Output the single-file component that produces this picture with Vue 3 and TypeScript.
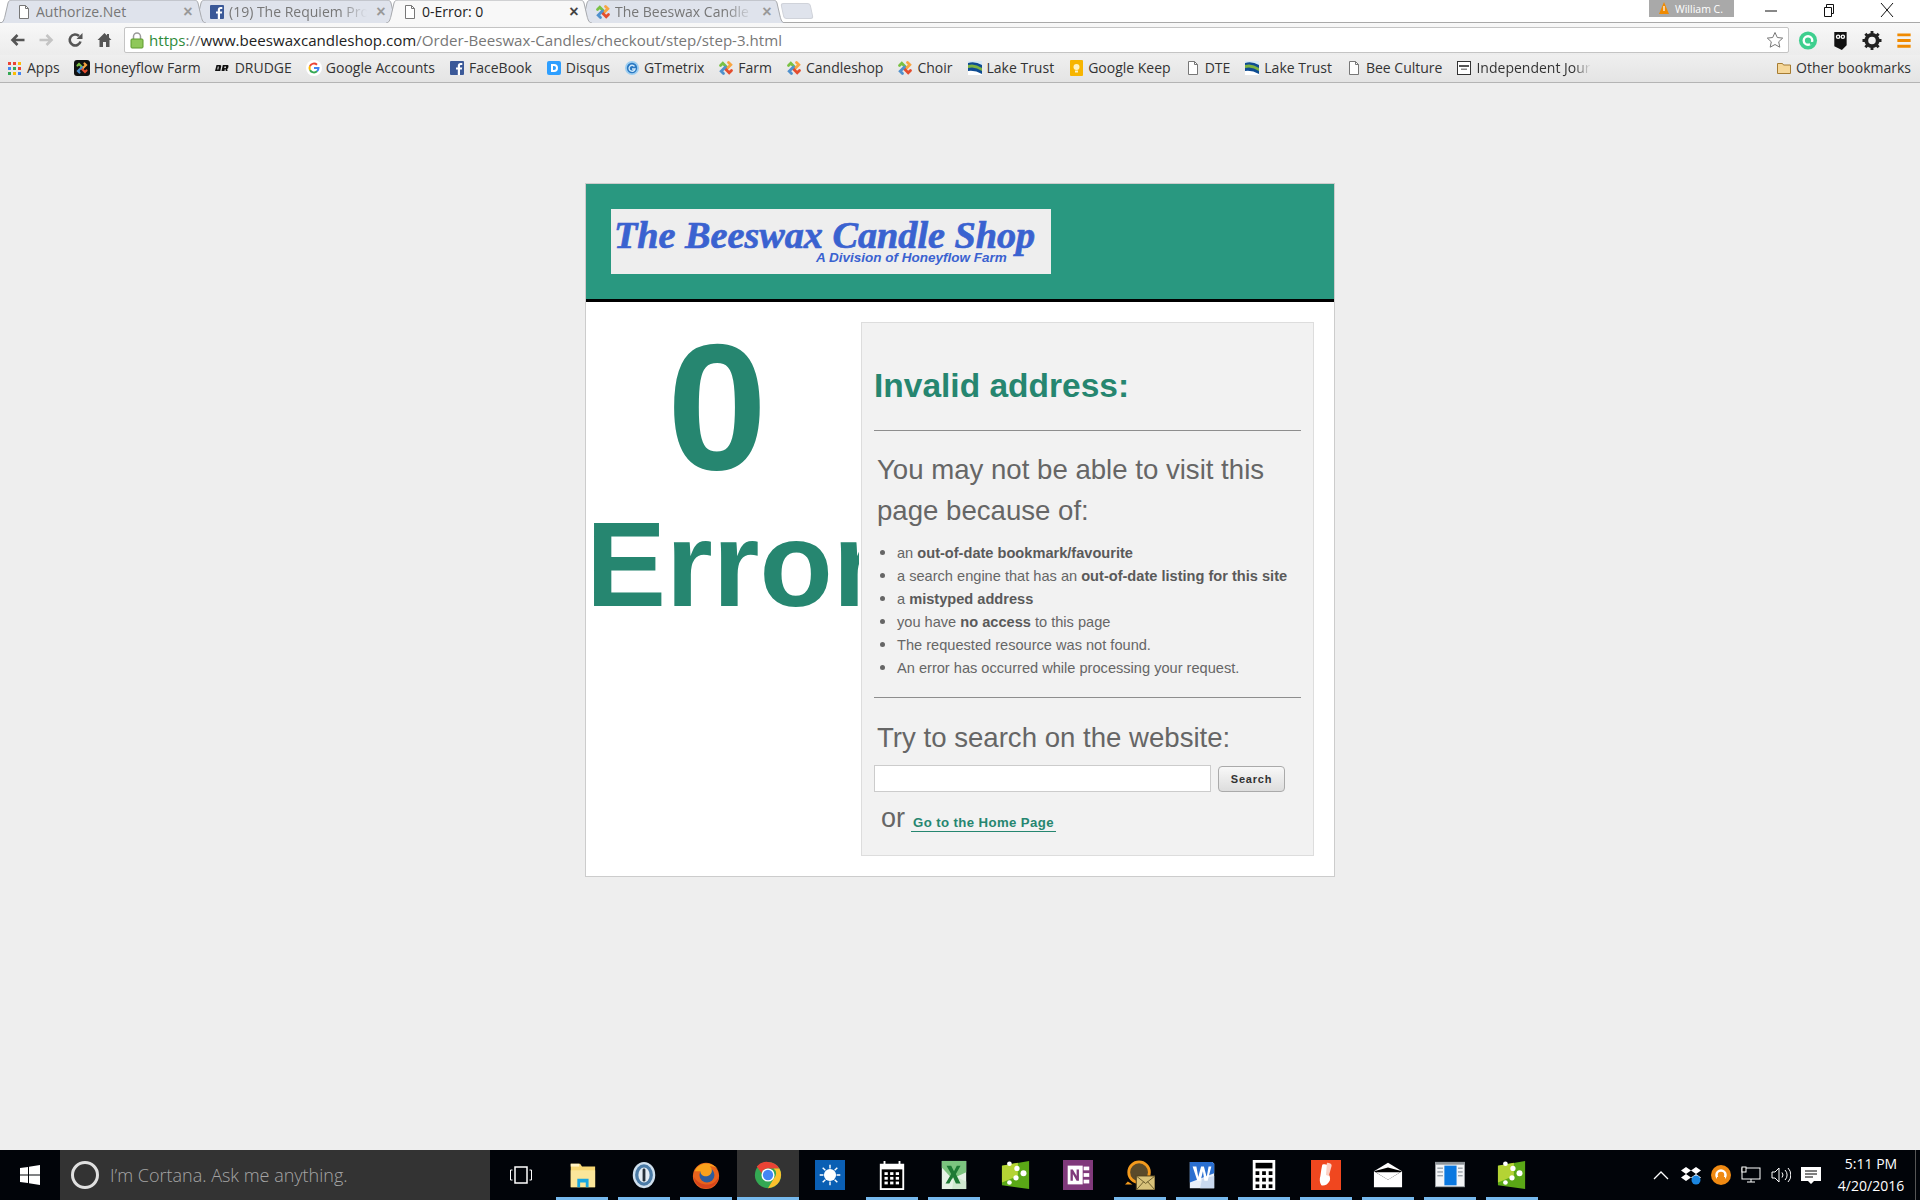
<script setup lang="ts">
interface Tab { title: string; icon: string; active?: boolean; fade?: boolean }
interface Bookmark { icon: string; label: string; fade?: boolean }
interface Task { icon: string; open?: boolean; active?: boolean }

const tabs: Tab[] = [
  { title: 'Authorize.Net', icon: 'i-page' },
  { title: '(19) The Requiem Project', icon: 'i-fb', fade: true },
  { title: '0-Error: 0', icon: 'i-page', active: true },
  { title: 'The Beeswax Candle Shop', icon: 'i-joomla', fade: true },
]
const bookmarks: Bookmark[] = [
  { icon: 'i-apps', label: 'Apps' },
  { icon: 'i-joomlab', label: 'Honeyflow Farm' },
  { icon: 'i-drudge', label: 'DRUDGE' },
  { icon: 'i-google', label: 'Google Accounts' },
  { icon: 'i-fb', label: 'FaceBook' },
  { icon: 'i-disqus', label: 'Disqus' },
  { icon: 'i-gt', label: 'GTmetrix' },
  { icon: 'i-joomla', label: 'Farm' },
  { icon: 'i-joomla', label: 'Candleshop' },
  { icon: 'i-joomla', label: 'Choir' },
  { icon: 'i-lake', label: 'Lake Trust' },
  { icon: 'i-keep', label: 'Google Keep' },
  { icon: 'i-page', label: 'DTE' },
  { icon: 'i-lake', label: 'Lake Trust' },
  { icon: 'i-page', label: 'Bee Culture' },
  { icon: 'i-indep', label: 'Independent Journal Review', fade: true },
]
const tasks: Task[] = [
  { icon: 't-explorer', open: true },
  { icon: 't-1pw', open: true },
  { icon: 't-firefox', open: true },
  { icon: 't-chrome', open: true, active: true },
  { icon: 't-sun' },
  { icon: 't-cal', open: true },
  { icon: 't-excel', open: true },
  { icon: 't-green' },
  { icon: 't-onenote' },
  { icon: 't-mail', open: true },
  { icon: 't-word', open: true },
  { icon: 't-calc', open: true },
  { icon: 't-acrobat', open: true },
  { icon: 't-env', open: true },
  { icon: 't-window', open: true },
  { icon: 't-green', open: true },
]
</script>

<template>
  <div class="screen">
    <svg class="defs" aria-hidden="true">
      <defs>
        <symbol id="i-page" viewBox="0 0 16 16"><path d="M3.500 1.500h6l3 3v10h-9z" fill="#fff" stroke="#777"/><path d="M9.500 1.500v3h3" fill="none" stroke="#777"/></symbol>
        <symbol id="i-fb" viewBox="0 0 16 16"><rect x="1" y="1" width="14" height="14" rx="1" fill="#3b5998"/><path d="M11 15V9.600h1.900l.3-2.200H11V6.100c0-.6.2-1 1.100-1h1.200V3.100c-.3 0-.9-.1-1.700-.1-1.700 0-2.800 1-2.800 2.900v1.500H7v2.200h1.800V15z" fill="#fff"/></symbol>
        <symbol id="i-joomla" viewBox="0 0 16 16"><g fill="none" stroke-width="2.800" stroke-linecap="round"><path d="M2.500 5.500 4.800 3.200 9 7.400" stroke="#7ac143"/><path d="M10.500 2.500l2.300 2.300L8.600 9" stroke="#f9a541"/><path d="M13.500 10.500l-2.300 2.300L7 8.600" stroke="#e44d2e"/><path d="M5.500 13.500 3.200 11.200 7.400 7" stroke="#5091cd"/></g></symbol>
        <symbol id="i-joomlab" viewBox="0 0 16 16"><rect width="16" height="16" rx="3" fill="#111"/><g fill="none" stroke-width="2.200" stroke-linecap="round"><path d="M3.500 5.500 5 4l3.800 3.800" stroke="#7ac143"/><path d="M10.500 3.500 12 5 8.200 8.800" stroke="#f9a541"/><path d="M12.500 10.500 11 12 7.200 8.200" stroke="#e44d2e"/><path d="M5.500 12.500 4 11l3.800-3.800" stroke="#5091cd"/></g></symbol>
        <symbol id="i-drudge" viewBox="0 0 16 16"><path d="M1.500 5h3.800l1 .8-1 5.200H0zM2.800 6.500l-.5 3h1l.5-3zM7.800 5h5l.8.800-.5 2.500-1 .7.500 2h-1.800l-.5-2.200h-.4l-.4 2.200H6.500zM9.500 6.500l-.3 1.500h1.600l.3-1.500z" fill="#111"/></symbol>
        <symbol id="i-google" viewBox="0 0 16 16"><circle cx="8" cy="8" r="8" fill="#fff"/><path d="M8 8h4.500a4.500 4.500 0 0 1-1.500 3.300" fill="none" stroke="#4285f4" stroke-width="2"/><path d="M11 11.300A4.500 4.500 0 0 1 4 10" fill="none" stroke="#34a853" stroke-width="2"/><path d="M4 10a4.500 4.500 0 0 1 0-4" fill="none" stroke="#fbbc05" stroke-width="2"/><path d="M4 6a4.500 4.500 0 0 1 7-1.300" fill="none" stroke="#ea4335" stroke-width="2"/></symbol>
        <symbol id="i-disqus" viewBox="0 0 16 16"><rect x="1" y="1" width="14" height="14" rx="2" fill="#2e9fff"/><path d="M5 4h3a4 4 0 0 1 0 8H5zm2 2v4h1a2 2 0 0 0 0-4z" fill="#fff" fill-rule="evenodd"/></symbol>
        <symbol id="i-gt" viewBox="0 0 16 16"><circle cx="8" cy="8" r="7" fill="#9ccdf0"/><circle cx="8" cy="8" r="5.200" fill="#2a78c2"/><path d="M10.500 6.500A3 3 0 1 0 11 9H8" fill="none" stroke="#cfe8fa" stroke-width="1.400"/></symbol>
        <symbol id="i-lake" viewBox="0 0 16 16"><rect x="1" y="1" width="14" height="14" fill="#0e4c92"/><path d="M1 5q7-2 14 3v3Q8 6 1 8z" fill="#7cb342"/><path d="M1 3q7-2 14 2V1H1z" fill="#d7e8f5"/><path d="M1 11q7-1 14 3v1H1z" fill="#fff"/></symbol>
        <symbol id="i-keep" viewBox="0 0 16 16"><rect x="2" y="0" width="13" height="16" rx="1" fill="#f7b500"/><circle cx="8.500" cy="7" r="3" fill="#fff3c4"/><rect x="7" y="10.500" width="3" height="2" fill="#fff3c4"/></symbol>
        <symbol id="i-indep" viewBox="0 0 16 16"><rect x="1.500" y="1.500" width="13" height="13" fill="#fff" stroke="#333"/><rect x="3" y="5" width="10" height="2" fill="#555"/><rect x="5" y="8.500" width="6" height="1.500" fill="#888"/></symbol>
        <symbol id="i-folder" viewBox="0 0 16 16"><path d="M1.500 3.500h5l1 1.500h7v8.500h-13z" fill="#f5d79a" stroke="#a67c32"/></symbol>
        <symbol id="i-apps" viewBox="0 0 16 16"><g fill="#ea4335"><rect x="1" y="2" width="3" height="3"/><rect x="6" y="2" width="3" height="3"/></g><rect x="11" y="2" width="3" height="3" fill="#fbbc05"/><rect x="1" y="7" width="3" height="3" fill="#4285f4"/><rect x="6" y="7" width="3" height="3" fill="#34a853"/><rect x="11" y="7" width="3" height="3" fill="#ea4335"/><rect x="1" y="12" width="3" height="3" fill="#34a853"/><rect x="6" y="12" width="3" height="3" fill="#fbbc05"/><rect x="11" y="12" width="3" height="3" fill="#4285f4"/></symbol>

        <symbol id="t-explorer" viewBox="0 0 32 32"><path d="M4 4h10l2 3h14v22H4z" fill="#f7d774"/><rect x="4" y="4" width="9" height="3" fill="#fff3c4"/><path d="M4 11h26v18H4z" fill="#fbe69a"/><path d="M11 29V20h12v9h-3v-5h-6v5z" fill="#19a7e0"/></symbol>
        <symbol id="t-1pw" viewBox="0 0 32 32"><ellipse cx="16" cy="16" rx="12" ry="14" fill="#cfe0ee"/><ellipse cx="16" cy="16" rx="9.500" ry="11.500" fill="#4b7ba6"/><ellipse cx="16" cy="16" rx="6" ry="8" fill="#e6eef5"/><rect x="14.500" y="9" width="3" height="14" rx="1.500" fill="#26303a"/></symbol>
        <symbol id="t-firefox" viewBox="0 0 32 32"><circle cx="16" cy="17" r="14" fill="#e8631c"/><circle cx="17" cy="16" r="8" fill="#2c5c9c"/><path d="M4 12C8 2 22 1 29 10c-3-3-7-4-9-3 3 2 3 7 0 9-4 3-10 1-10-4 0 0-3 0-6 0z" fill="#f9a11b"/><path d="M3 18c1 9 9 13 15 12 6-1 11-6 12-13-3 7-9 10-15 9-6-1-10-4-12-8z" fill="#d8451c"/></symbol>
        <symbol id="t-chrome" viewBox="0 0 32 32"><circle cx="16" cy="16" r="14" fill="#34a853"/><path d="M16 2a14 14 0 0 1 12.100 7H16a7 7 0 0 0-6.700 5L4 7a14 14 0 0 1 12-5z" fill="#ea4335"/><path d="M28.100 9A14 14 0 0 1 16 30l6-10a7 7 0 0 0 0-11z" fill="#fbc02d"/><circle cx="16" cy="16" r="7" fill="#fff"/><circle cx="16" cy="16" r="5.500" fill="#4285f4"/></symbol>
        <symbol id="t-sun" viewBox="0 0 32 32"><rect width="32" height="32" fill="#0a5fb4"/><circle cx="16" cy="16" r="6.500" fill="#fff"/><path d="M16 5v4M16 23v4M5 16h4M23 16h4M8.200 8.200l2.800 2.800M21 21l2.800 2.800M8.200 23.800 11 21M21 11l2.800-2.800" stroke="#fff" stroke-width="1.500"/></symbol>
        <symbol id="t-cal" viewBox="0 0 32 32"><path d="M3 4h4V1h2v3h14V1h2v3h4v28H3z" fill="#fff"/><rect x="5" y="10" width="22" height="20" fill="#000"/><g fill="#fff"><rect x="8" y="13" width="3.500" height="3"/><rect x="14" y="13" width="3.500" height="3"/><rect x="20" y="13" width="3.500" height="3"/><rect x="8" y="18" width="3.500" height="3"/><rect x="14" y="18" width="3.500" height="3"/><rect x="20" y="18" width="3.500" height="3"/><rect x="8" y="23" width="3.500" height="3"/><rect x="14" y="23" width="3.500" height="3"/><rect x="20" y="23" width="3.500" height="3"/></g></symbol>
        <symbol id="t-excel" viewBox="0 0 32 32"><path d="M3 1h26v30H3z" fill="#e6f2e6"/><path d="M29 1v12L14 20 3 8V1z" fill="#7cc47f"/><path d="M16 17l13 6v8H14z" fill="#cfe7cf"/><path d="M8 6h5l3 6 3-6h4l-5 9 5 10h-5l-3-7-4 7H7l6-10z" fill="#1f7a35"/></symbol>
        <symbol id="t-green" viewBox="0 0 32 32"><path d="M1 6 30 1v30L1 27z" fill="#5aa816"/><path d="M1 6 18 3v14L1 24z" fill="#b4d334"/><g fill="#fff"><circle cx="9" cy="4" r="2.500"/><circle cx="17" cy="9" r="2.800"/><circle cx="24" cy="14" r="3.200"/><circle cx="16" cy="19" r="2.800"/><circle cx="9" cy="24" r="2.500"/></g></symbol>
        <symbol id="t-onenote" viewBox="0 0 32 32"><rect width="32" height="32" fill="#80397b"/><rect x="5" y="6" width="16" height="20" fill="#fff"/><path d="M8 22V10h2.500l4 7v-7H17v12h-2.500l-4-7v7z" fill="#80397b"/><g fill="#fff"><rect x="22" y="7" width="6" height="4"/><rect x="22" y="14" width="6" height="4"/><rect x="22" y="21" width="6" height="4"/></g></symbol>
        <symbol id="t-mail" viewBox="0 0 32 32"><circle cx="15" cy="13" r="11" fill="#5a4a2a" stroke="#f39a1d" stroke-width="3"/><path d="M3 23l-3 3h8z" fill="#f39a1d"/><rect x="12" y="17" width="20" height="15" fill="#d8c27a" stroke="#4a3a1a"/><path d="M12 17l10 8 10-8M12 32l8-9M32 32l-8-9" fill="none" stroke="#6a5a2a"/></symbol>
        <symbol id="t-word" viewBox="0 0 32 32"><path d="M3 2h24l2 2v26H3z" fill="#e9f0fa"/><path d="M3 2h24l2 2v10L3 24z" fill="#2a6fd0"/><path d="M16 20l13-3v13H14z" fill="#c9d9ef"/><path d="M6 7h4l2 11 3-11h3l3 11 2-11h3l-4 15h-3.500L17 12l-2.500 10H11z" fill="#fff"/></symbol>
        <symbol id="t-calc" viewBox="0 0 32 32"><rect x="4" width="24" height="32" fill="#fff"/><rect x="7" y="3" width="18" height="6" fill="#000"/><g fill="#000"><rect x="7" y="12" width="4" height="4"/><rect x="14" y="12" width="4" height="4"/><rect x="21" y="12" width="4" height="4"/><rect x="7" y="19" width="4" height="4"/><rect x="14" y="19" width="4" height="4"/><rect x="21" y="19" width="4" height="4"/><rect x="7" y="26" width="4" height="4"/><rect x="14" y="26" width="4" height="4"/><rect x="21" y="26" width="4" height="4"/></g></symbol>
        <symbol id="t-acrobat" viewBox="0 0 32 32"><rect width="32" height="32" fill="#f0471f"/><path d="M12 5c3-1 6 0 7 2l-1 7c2 2 3 5 2 8-2 4-6 6-9 5-2-3-2-7-1-10l1-7z" fill="#fff"/><path d="M17 3c3 0 5 1 5 3l-3 11-3-1z" fill="#fbd0c4"/></symbol>
        <symbol id="t-env" viewBox="0 0 32 32"><path d="M1 12 16 3l15 9v17H1z" fill="#fff"/><path d="M1 12l15 9 15-9-15-4z" fill="#000"/><path d="M3 13l13 8 13-8" fill="#fff"/></symbol>
        <symbol id="t-window" viewBox="0 0 32 32"><rect y="2" width="32" height="27" fill="#8e9499"/><rect x="1" y="5" width="30" height="23" fill="#f2f4f6"/><rect x="10" y="6" width="13" height="21" fill="#0a78e0"/><g fill="#9aa3aa"><rect x="2.500" y="8" width="6" height="1.500"/><rect x="2.500" y="12" width="6" height="1.500"/><rect x="2.500" y="16" width="6" height="1.500"/><rect x="24.500" y="8" width="5" height="1.500"/><rect x="24.500" y="12" width="5" height="1.500"/><rect x="24.500" y="16" width="5" height="1.500"/></g></symbol>
      </defs>
    </svg>

    <header class="chrome">
      <div class="tabstrip">
        <div
          v-for="(t, i) in tabs"
          :key="i"
          class="tab"
          :class="{ active: t.active }"
          :style="{ zIndex: t.active ? 10 : 5 - i }"
        >
          <svg class="tab-bg" viewBox="0 0 206 23" preserveAspectRatio="none">
            <path d="M0 23c3 0 4-3 5-7L8 3c.5-2 2-3 4-3h182c2 0 3.500 1 4 3l3 13c1 4 2 7 5 7" />
          </svg>
          <svg class="ic16"><use :href="'#' + t.icon" /></svg>
          <span class="tab-title" :class="{ fade: t.fade }">{{ t.title }}</span>
          <span class="tab-x">×</span>
        </div>
        <div class="newtab"></div>
        <div class="spacer"></div>
        <div class="user">
          <svg width="12" height="13" viewBox="0 0 12 13"><path d="M6 0l5 12H1z" fill="#f08a00"/><rect x="5.400" y="4" width="1.200" height="5" fill="#fff"/></svg>
          <span>William C.</span>
        </div>
        <div class="winbtns">
          <svg width="58" height="20" viewBox="0 0 14 20"><path d="M1 11h12" stroke="#111" /></svg>
          <svg width="58" height="20" viewBox="0 0 14 20"><path d="M2.500 7.500h7v9h-7zM4.500 7V4.500h7v9H10" fill="none" stroke="#111"/></svg>
          <svg width="58" height="20" viewBox="0 0 14 20"><path d="M1 3l12 14M13 3 1 17" stroke="#111" fill="none"/></svg>
        </div>
      </div>

      <div class="toolbar">
        <div class="nav">
          <svg viewBox="0 0 16 16"><path d="M15 8H4M8 3 3 8l5 5" fill="none" stroke="#555" stroke-width="2.600"/></svg>
          <svg viewBox="0 0 16 16"><path d="M1 8h11M8 3l5 5-5 5" fill="none" stroke="#c4c4c4" stroke-width="2.600"/></svg>
          <svg viewBox="0 0 16 16"><path d="M13 9.500A5.500 5.500 0 1 1 11.500 4" fill="none" stroke="#555" stroke-width="2.600"/><path d="M9 7h6V1z" fill="#555"/></svg>
          <svg viewBox="0 0 16 16"><path d="M8 1 1 8h2v7h3.500v-5h3v5H13V8h2l-2.500-2.500V2h-2v1.500z" fill="#555"/></svg>
        </div>
        <div class="omnibox">
          <svg class="lock" width="14" height="17" viewBox="0 0 14 17"><path d="M3.500 7V4.500a3.500 3.500 0 0 1 7 0V7" fill="none" stroke="#9a9a9a" stroke-width="1.500"/><rect x="1" y="7" width="12" height="9" rx="1" fill="#8fc85a" stroke="#5c9a2c"/></svg>
          <span class="url"><span class="https">https</span><span class="grey">://</span><span class="host">www.beeswaxcandleshop.com</span><span class="grey">/Order-Beeswax-Candles/checkout/step/step-3.html</span></span>
          <svg class="star" width="18" height="18" viewBox="0 0 18 18"><path d="M9 1.500l2.300 5 5.400.6-4 3.700 1.100 5.400L9 13.500l-4.800 2.700 1.100-5.400-4-3.700 5.400-.6z" fill="#fff" stroke="#777"/></svg>
        </div>
        <div class="exts">
          <svg viewBox="0 0 20 20"><circle cx="10" cy="10" r="9.500" fill="#3ecf8e"/><circle cx="10" cy="10" r="4.500" fill="none" stroke="#fff" stroke-width="2.500"/><path d="M12 13h4" stroke="#3ecf8e" stroke-width="3"/></svg>
          <svg viewBox="0 0 20 20"><path d="M4 1h13v14l-5 5-8-4z" fill="#111"/><circle cx="8" cy="6" r="2.400" fill="#fff"/><circle cx="13" cy="6" r="2.400" fill="#fff"/><circle cx="8" cy="6" r="1" fill="#111"/><circle cx="13" cy="6" r="1" fill="#111"/></svg>
          <svg viewBox="0 0 20 20"><circle cx="10" cy="10" r="6" fill="none" stroke="#222" stroke-width="4"/><path d="M10 0v4M10 16v4M0 10h4M16 10h4M3 3l3 3M14 14l3 3M3 17l3-3M14 6l3-3" stroke="#222" stroke-width="3"/></svg>
          <svg viewBox="0 0 20 20"><path d="M3 4h14M3 10h14M3 16h14" stroke="#f08a00" stroke-width="3"/></svg>
        </div>
      </div>

      <nav class="bookmarks">
        <div v-for="(b, i) in bookmarks" :key="i" class="bm">
          <svg class="ic16"><use :href="'#' + b.icon" /></svg>
          <span :class="{ 'bm-fade': b.fade }">{{ b.label }}</span>
        </div>
        <div class="spacer"></div>
        <div class="bm other">
          <svg class="ic16"><use href="#i-folder" /></svg>
          <span>Other bookmarks</span>
        </div>
      </nav>
    </header>

    <main class="page">
      <section class="card">
        <div class="banner">
          <div class="logo">
            <span class="logo-main">The Beeswax Candle Shop</span>
            <span class="logo-sub">A Division of Honeyflow Farm</span>
          </div>
        </div>
        <div class="content">
          <div class="code">
            <h1 class="num">0</h1>
            <h2 class="err">Error</h2>
          </div>
          <div class="panel">
            <h3 class="invalid">Invalid address:</h3>
            <hr />
            <p class="lead">You may not be able to visit this page because of:</p>
            <ul>
              <li>an <b>out-of-date bookmark/favourite</b></li>
              <li>a search engine that has an <b>out-of-date listing for this site</b></li>
              <li>a <b>mistyped address</b></li>
              <li>you have <b>no access</b> to this page</li>
              <li>The requested resource was not found.</li>
              <li>An error has occurred while processing your request.</li>
            </ul>
            <hr />
            <p class="lead try">Try to search on the website:</p>
            <form class="search" @submit.prevent>
              <input type="text" />
              <button type="button">Search</button>
            </form>
            <p class="or"><span>or</span><a href="#">Go to the Home Page</a></p>
          </div>
        </div>
      </section>
    </main>

    <footer class="taskbar">
      <div class="start">
        <svg width="20" height="20" viewBox="0 0 20 20"><path d="M0 3l8-1v7.500H0zM9 1.800 20 0v9.500H9zM0 10.500h8V18l-8-1zM9 10.500h11V20L9 18.200z" fill="#fff"/></svg>
      </div>
      <div class="cortana">
        <span class="ring"></span>
        <span class="ask">I’m Cortana. Ask me anything.</span>
      </div>
      <div class="taskview">
        <svg width="24" height="20" viewBox="0 0 24 20"><rect x="6" y="2" width="12" height="16" fill="none" stroke="#fff" stroke-width="1.500"/><path d="M3.500 5H1.500v10h2M20.500 5h2v10h-2" fill="none" stroke="#fff"/></svg>
      </div>
      <div
        v-for="(t, i) in tasks"
        :key="i"
        class="task"
        :class="{ open: t.open, current: t.active }"
      >
        <svg width="30" height="30"><use :href="'#' + t.icon" /></svg>
      </div>
      <div class="spacer"></div>
      <div class="tray">
        <svg viewBox="0 0 20 20"><path d="M3 14l7-7 7 7" fill="none" stroke="#fff" stroke-width="1.300"/></svg>
        <svg viewBox="0 0 20 20"><path d="M5 2 10 5.500 5 9 0 5.500zM15 2l5 3.500L15 9l-5-3.500zM5 9l5 3.500L5 16l-5-3.500zM15 9l5 3.500L15 16l-5-3.500z" fill="#fff"/><circle cx="15" cy="15" r="4.500" fill="#1b86e0"/></svg>
        <svg viewBox="0 0 20 20"><circle cx="10" cy="10" r="10" fill="#f08a12"/><circle cx="10" cy="10" r="4.500" fill="none" stroke="#fff" stroke-width="2.500"/><rect x="6" y="12" width="8" height="4" fill="#f08a12"/></svg>
        <svg viewBox="0 0 20 20"><rect x="1" y="3" width="18" height="11" fill="none" stroke="#fff" stroke-width="1"/><path d="M10 14v3M6 17h8" stroke="#fff"/><rect x="1" y="2" width="4" height="5" fill="#000" stroke="#fff"/></svg>
        <svg viewBox="0 0 20 20"><path d="M1 7h3l4-4v14l-4-4H1z" fill="none" stroke="#fff"/><path d="M11 7.500a4 4 0 0 1 0 5M14 5a7 7 0 0 1 0 10M17 3a10 10 0 0 1 0 14" fill="none" stroke="#fff"/></svg>
        <svg viewBox="0 0 20 20"><path d="M0 2h20v14h-7l-3 3-3-3H0z" fill="#fff"/><path d="M4 6h12M4 9h12M4 12h8" stroke="#000"/></svg>
      </div>
      <div class="clock"><span>5:11 PM</span><span>4/20/2016</span></div>
      <div class="desk"></div>
    </footer>
  </div>
</template>

<style>
html, body { margin: 0; padding: 0; background: #eee; }
</style>

<style scoped>
.screen { width: 1920px; height: 1200px; display: flex; flex-direction: column; overflow: hidden; background: #eee; font-family: "Liberation Sans", Arial, sans-serif; }
.defs { position: absolute; width: 0; height: 0; }
.ic16 { width: 16px; height: 16px; flex: none; }
.spacer { flex: 1; }

.chrome { flex: none; font-family: "Open Sans", "Noto Sans", sans-serif; }
.tabstrip { height: 23px; display: flex; background: #fff; box-shadow: inset 0 -1px 0 #a9a9a9; }
.tab { position: relative; isolation: isolate; width: 206px; height: 23px; margin-right: -13px; flex: none; display: flex; align-items: center; padding: 0 12px 0 16px; box-sizing: border-box; font-size: 14px; color: #777; }
.tab-bg { position: absolute; inset: 0; width: 100%; height: 100%; z-index: -1; }
.tab-bg path { fill: #dfe3ec; stroke: #a7a9ad; stroke-width: 1; }
.tab.active { color: #222; }
.tab.active .tab-bg path { fill: #f8f8f8; }
.tab-title { flex: 1; min-width: 0; margin-left: 4px; overflow: hidden; white-space: nowrap; line-height: 18px; }
.tab-title.fade { -webkit-mask-image: linear-gradient(90deg, #000 80%, transparent); mask-image: linear-gradient(90deg, #000 80%, transparent); }
.tab-x { width: 12px; margin-left: 8px; font: 700 16px/18px "Liberation Sans", sans-serif; color: #999; text-align: center; }
.tab.active .tab-x { color: #444; }
.newtab { width: 28px; height: 14px; margin: 3px 0 0 10px; background: #dfe3ec; border: 1px solid #d0d3da; border-radius: 3px; transform: skewX(12deg); }
.user { width: 85px; height: 17px; background: #a9a9a9; color: #fff; display: flex; align-items: center; gap: 5px; padding-left: 9px; box-sizing: border-box; font-size: 10.500px; }
.winbtns { display: flex; margin-left: 8px; height: 20px; padding-right: 4px; }

.toolbar { height: 32px; box-sizing: border-box; padding: 2px 0 0 3px; display: flex; align-items: center; background: linear-gradient(#f8f8f8, #ececec); }
.nav { width: 116px; display: flex; flex: none; }
.nav svg { width: 29px; height: 16px; }
.omnibox { flex: 1; min-width: 0; margin-left: 5px; height: 26px; box-sizing: border-box; background: #fff; border: 1px solid #c4c4c4; border-radius: 2px; display: flex; align-items: center; padding: 0 4px 0 5px; }
.url { flex: 1; margin-left: 5px; font-size: 15.100px; white-space: nowrap; }
.https { color: #2e8b3a; }
.grey { color: #777; }
.host { color: #222; }
.exts { width: 128px; margin-left: 3px; display: flex; flex: none; }
.exts svg { width: 32px; height: 19px; }

.bookmarks { height: 28px; box-sizing: border-box; display: flex; align-items: center; gap: 14px; padding: 0 9px 2px 7px; background: linear-gradient(#efefef, #e4e4e4); border-bottom: 1px solid #b4b4b4; font-size: 14px; color: #333; white-space: nowrap; }
.bm { display: flex; align-items: center; gap: 4px; }
.bm-fade { display: block; width: 115px; overflow: hidden; -webkit-mask-image: linear-gradient(90deg, #000 85%, transparent); mask-image: linear-gradient(90deg, #000 85%, transparent); }

.page { flex: 1; min-height: 0; padding-top: 100px; display: flex; justify-content: center; }
.card { width: 750px; height: 694px; box-sizing: border-box; border: 1px solid #ccc; background: #fff; display: flex; flex-direction: column; }
.banner { height: 118px; box-sizing: border-box; background: #299880; border-bottom: 3px solid #000; padding: 25px 0 0 25px; }
.logo { width: 440px; height: 65px; background: #eee; display: flex; flex-direction: column; color: #3a62d0; font-style: italic; font-weight: 700; overflow: hidden; }
.logo-main { font: italic 700 38.200px/40px "Liberation Serif", serif; -webkit-text-stroke: .7px #3a62d0; padding: 6px 0 0 3px; white-space: nowrap; }
.logo-sub { font: italic 700 13.500px/15px "Liberation Sans", sans-serif; margin: -5px 0 0 205px; white-space: nowrap; }

.content { flex: 1; display: flex; padding: 20px 20px 20px 0; }
.code { flex: none; width: 273px; box-sizing: border-box; padding-right: 11px; margin-right: 2px; overflow: hidden; text-align: center; color: #268670; white-space: nowrap; }
.num { margin: 0; font-size: 180px; line-height: 170px; font-weight: 700; }
.err { margin: 0; font-size: 120px; line-height: 145px; font-weight: 700; text-align: left; }
.panel { flex: 1; box-sizing: border-box; background: #f2f2f2; border: 1px solid #ddd; padding: 0 12px; color: #666; }
.invalid { margin: 38px 0 0; font-size: 33.500px; line-height: 50px; color: #268670; font-weight: 700; }
hr { border: 0; border-top: 1px solid #8e8e8e; margin: 0; }
.invalid + hr { margin-top: 19px; }
.lead { margin: 18px 0 0 3px; font-size: 27.600px; line-height: 41px; }
ul { margin: 10px 0 0; padding: 0 0 0 23px; font-size: 14.600px; line-height: 23px; }
li { height: 23px; }
li::marker { font-size: 17px; }
ul + hr { margin-top: 18px; }
b { font-weight: 700; color: #5a5a5a; }
.lead.try { margin-top: 19px; }
.search { display: flex; margin-top: 7px; }
.search input { width: 337px; height: 27px; box-sizing: border-box; border: 1px solid #ccc; background: #fff; padding: 0; }
.search button { width: 67px; height: 26px; margin: 1px 0 0 7px; padding: 0; border: 1px solid #aaa; border-radius: 4px; background: linear-gradient(#f8f8f8, #ddd); font: 700 11px "Liberation Sans", sans-serif; letter-spacing: .8px; color: #333; }
.or { margin: 8px 0 0 7px; display: flex; align-items: baseline; font-size: 27px; line-height: 36px; }
.or a { margin-left: 6px; padding: 0 2px; font-size: 13.200px; font-weight: 700; letter-spacing: .4px; color: #268670; text-decoration: none; border-bottom: 1px solid #268670; line-height: 16px; }

.taskbar { height: 50px; flex: none; display: flex; background: #010409; font-family: "Open Sans", "Noto Sans", sans-serif; color: #fff; }
.start { width: 60px; display: flex; align-items: center; justify-content: center; }
.cortana { width: 430px; background: #333; display: flex; align-items: center; }
.ring { width: 22px; height: 22px; margin-left: 11px; border: 3px solid #e0e0e0; border-radius: 50%; }
.ask { margin-left: 11px; font-size: 18px; font-weight: 300; color: #a5a5a5; white-space: nowrap; }
.taskview { width: 61px; display: flex; align-items: center; justify-content: center; }
.task { width: 62px; flex: none; display: flex; align-items: center; justify-content: center; position: relative; }
.task.open::after { content: ""; position: absolute; left: 5px; right: 5px; bottom: 0; height: 3px; background: #76b9ed; }
.task.current { background: #333; }
.task.current::after { left: 0; right: 0; }
.tray { display: flex; align-items: center; gap: 10px; }
.tray svg { width: 20px; height: 20px; }
.clock { width: 88px; margin-left: 6px; display: flex; flex-direction: column; align-items: center; justify-content: center; font-size: 14px; line-height: 22px; }
.desk { width: 5px; border-left: 1px solid #555; box-sizing: border-box; }
</style>
